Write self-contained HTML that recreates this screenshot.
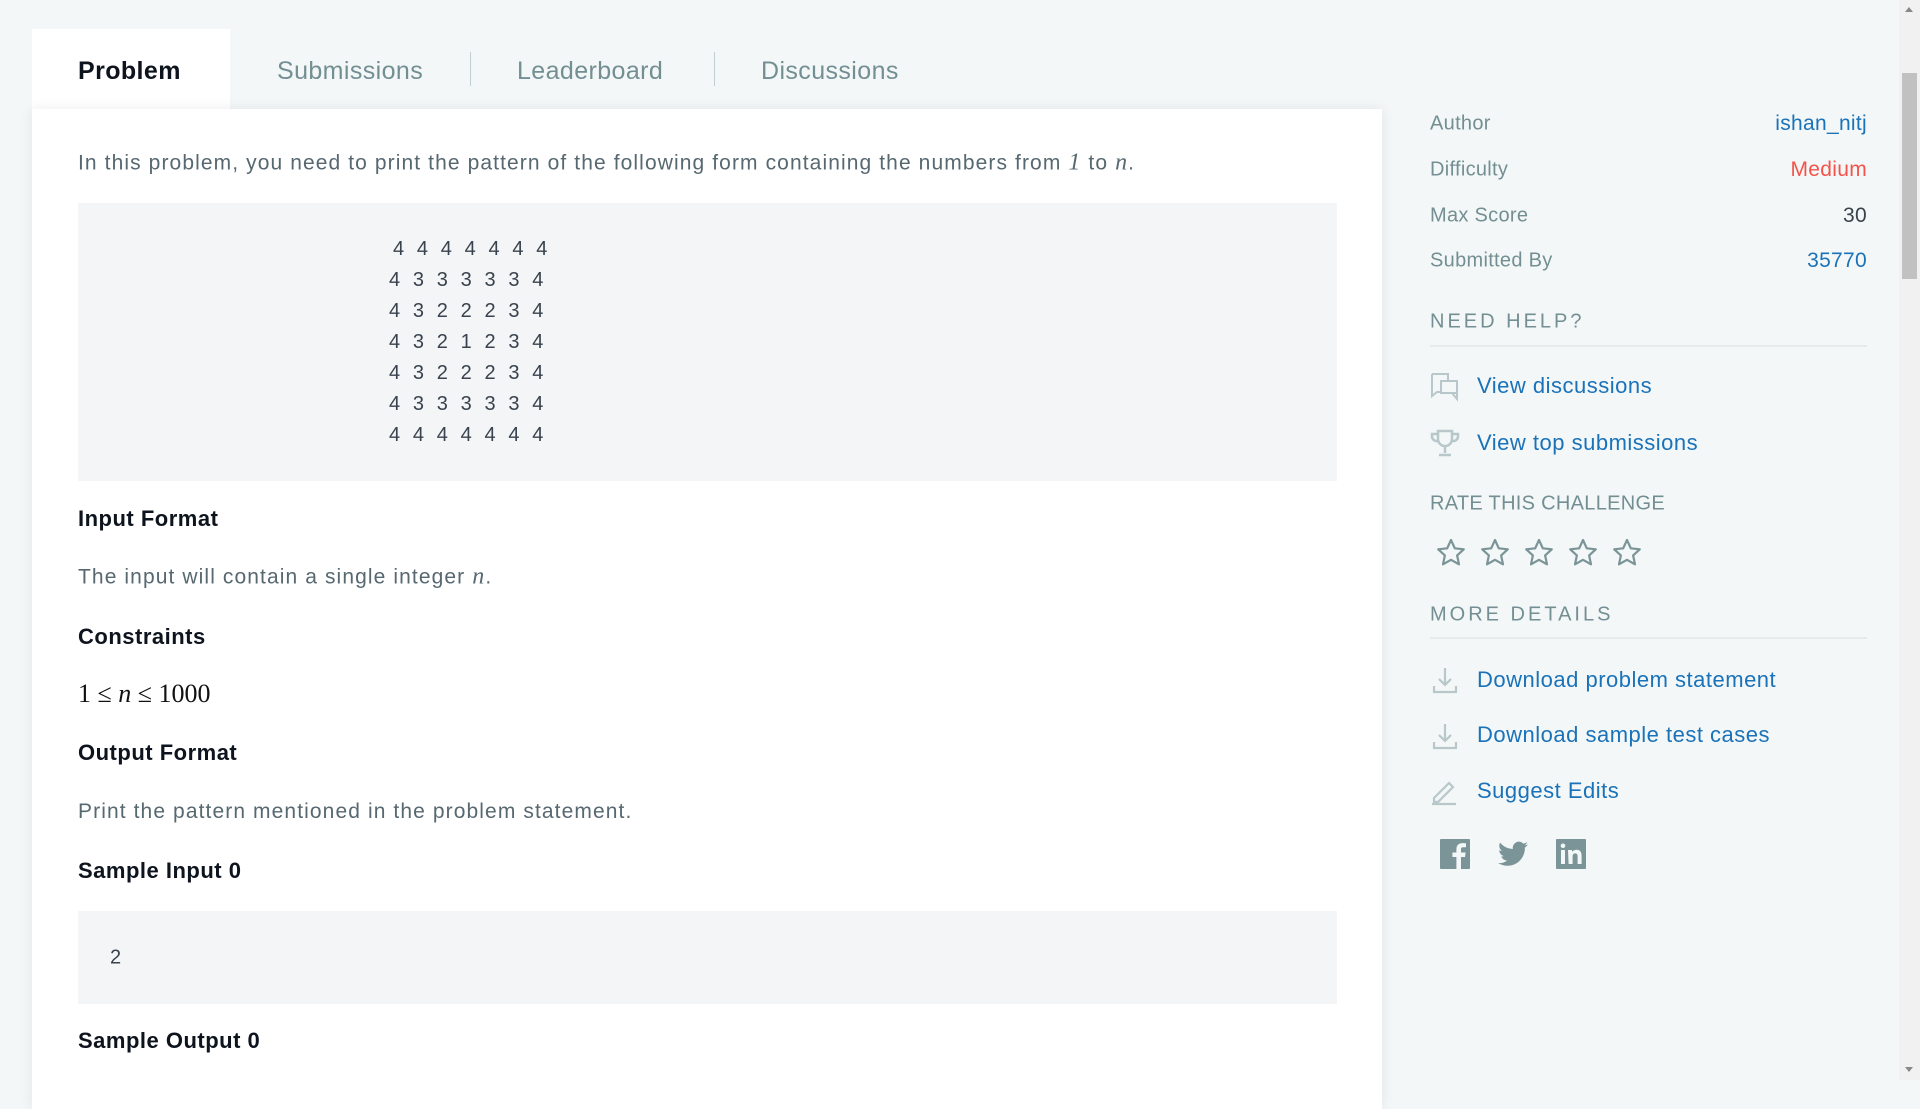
<!DOCTYPE html>
<html><head><meta charset="utf-8"><style>
*{margin:0;padding:0;box-sizing:border-box}
body{width:1920px;height:1080px;overflow:hidden;background:#f3f7f7;font-family:"Liberation Sans",sans-serif;position:relative;color:#39424e}
.abs{position:absolute;white-space:nowrap}
.tab{position:absolute;top:29px;height:80px;line-height:84px;font-size:25px;color:#738f93;letter-spacing:.4px}
.card{position:absolute;left:32px;top:109px;width:1350px;height:1000px;background:#fff;box-shadow:0 0 12px rgba(0,0,0,.08)}
.t{position:absolute;left:78px;font-size:21px;color:#576871;white-space:nowrap;transform:translateY(-50%);letter-spacing:1.1px}
.h{position:absolute;left:78px;font-size:22px;font-weight:bold;color:#0e141e;white-space:nowrap;transform:translateY(-50%);letter-spacing:.5px}
.pre{position:absolute;left:78px;width:1259px;background:#f3f5f6}
.pat{position:absolute;left:389px;font-size:20px;line-height:31px;color:#39424e;white-space:pre;letter-spacing:3.6px}
.lab{position:absolute;left:1430px;font-size:20px;color:#738f93;transform:translateY(-50%);letter-spacing:.3px}
.val{position:absolute;right:53px;font-size:21px;transform:translateY(-50%);letter-spacing:.3px}
.sec{position:absolute;left:1430px;font-size:20px;color:#738f93;letter-spacing:3px;transform:translateY(-50%)}
.line{position:absolute;left:1430px;width:437px;height:2px;background:#e5eaea}
.lnk{position:absolute;left:1477px;font-size:22px;color:#1a72b9;transform:translateY(-50%);white-space:nowrap;letter-spacing:.5px}
.ic{position:absolute;left:1430px}
i{font-family:"Liberation Serif",serif;font-size:24px}
</style></head><body>
<div class="tab" style="left:32px;width:198px;background:#fff;color:#0e141e;font-weight:bold;padding-left:46px">Problem</div>
<div class="tab" style="left:277px">Submissions</div>
<div class="abs" style="left:470px;top:52px;width:1px;height:34px;background:#c2cfd0"></div>
<div class="tab" style="left:517px">Leaderboard</div>
<div class="abs" style="left:714px;top:52px;width:1px;height:34px;background:#c2cfd0"></div>
<div class="tab" style="left:761px">Discussions</div>
<div class="card"></div>
<div class="t" style="top:163px">In this problem, you need to print the pattern of the following form containing the numbers from <i>1</i> to <i>n</i>.</div>
<div class="pre" style="top:203px;height:278px"></div>
<div class="pat" style="top:234px"><span style="padding-left:4px">4 4 4 4 4 4 4</span>
4 3 3 3 3 3 4
4 3 2 2 2 3 4
4 3 2 1 2 3 4
4 3 2 2 2 3 4
4 3 3 3 3 3 4
4 4 4 4 4 4 4</div>
<div class="h" style="top:519px">Input Format</div>
<div class="t" style="top:577px">The input will contain a single integer <i>n</i>.</div>
<div class="h" style="top:637px">Constraints</div>
<div class="t" style="top:694px;font-family:'Liberation Serif',serif;font-size:26px;color:#111;letter-spacing:0">1 ≤ <i style="font-size:26px">n</i> ≤ 1000</div>
<div class="h" style="top:753px">Output Format</div>
<div class="t" style="top:812px">Print the pattern mentioned in the problem statement.</div>
<div class="h" style="top:871px">Sample Input 0</div>
<div class="pre" style="top:911px;height:93px"></div>
<div class="t" style="top:958px;left:110px;color:#39424e;font-size:20px">2</div>
<div class="h" style="top:1041px">Sample Output 0</div>

<div class="lab" style="top:124px">Author</div><div class="val" style="top:124px;color:#1a72b9">ishan_nitj</div>
<div class="lab" style="top:170px">Difficulty</div><div class="val" style="top:170px;color:#f5534a">Medium</div>
<div class="lab" style="top:216px">Max Score</div><div class="val" style="top:216px;color:#39424e">30</div>
<div class="lab" style="top:261px">Submitted By</div><div class="val" style="top:261px;color:#1a72b9">35770</div>
<div class="sec" style="top:322px">NEED HELP?</div><div class="line" style="top:345px"></div>
<svg class="ic" style="top:372px" width="30" height="30" viewBox="0 0 30 30" fill="none" stroke="#b8c8ca" stroke-width="2"><path d="M2 2h16v6M2 2v22l5-4h5"/><rect x="11" y="9" width="16" height="12"/><path d="M27 21v6l-5-6"/></svg>
<div class="lnk" style="top:386px">View discussions</div>
<svg class="ic" style="top:429px" width="30" height="30" viewBox="0 0 30 30" fill="none" stroke="#b8c8ca" stroke-width="2.5"><path d="M8 2h14v8a7 7 0 0 1-14 0z M8 5H2v3a5 5 0 0 0 6 4 M22 5h6v3a5 5 0 0 1-6 4 M15 17v7 M9 26h12"/></svg>
<div class="lnk" style="top:443px">View top submissions</div>
<div class="sec" style="top:504px;letter-spacing:.3px;font-size:20px">RATE THIS CHALLENGE</div>
<svg class="abs" style="left:1436px;top:538px" width="210" height="30" viewBox="0 0 210 30">
<g fill="none" stroke="#7a9497" stroke-width="2.2" stroke-linejoin="round">
<path id="s" d="M15 2l3.8 8.3 9 1-6.7 6.1 1.9 8.9L15 21.8l-8 4.5 1.9-8.9L2.2 11.3l9-1z"/>
<use href="#s" x="44"/><use href="#s" x="88"/><use href="#s" x="132"/><use href="#s" x="176"/></g></svg>
<div class="sec" style="top:615px">MORE DETAILS</div><div class="line" style="top:637px"></div>
<svg class="ic" style="top:666px" width="30" height="30" viewBox="0 0 30 30" fill="none" stroke="#b8c8ca" stroke-width="2.2"><path d="M15 2v17M9 13l6 6 6-6M4 20v6h22v-6"/></svg>
<div class="lnk" style="top:680px">Download problem statement</div>
<svg class="ic" style="top:722px" width="30" height="30" viewBox="0 0 30 30" fill="none" stroke="#b8c8ca" stroke-width="2.2"><path d="M15 2v17M9 13l6 6 6-6M4 20v6h22v-6"/></svg>
<div class="lnk" style="top:735px">Download sample test cases</div>
<svg class="ic" style="top:776px" width="30" height="30" viewBox="0 0 30 30" fill="none" stroke="#b8c8ca" stroke-width="2.2"><path d="M4 22l15-15 4 4-15 15H4z M2 28h24"/></svg>
<div class="lnk" style="top:791px">Suggest Edits</div>
<svg class="abs" style="left:1440px;top:839px" width="30" height="30" viewBox="0 0 30 30"><rect width="30" height="30" rx="1" fill="#7a9497"/><path d="M21 30V18h4l.6-4.5H21v-3c0-1.3.4-2.2 2.2-2.2H26V4.3c-.5 0-2-.2-3.6-.2-3.5 0-6 2.1-6 6v3.4h-4V18h4v12z" fill="#f3f7f7"/></svg>
<svg class="abs" style="left:1498px;top:841px" width="30" height="26" viewBox="0 0 24 20"><path fill="#7a9497" d="M24 2.4c-.9.4-1.8.6-2.8.8 1-.6 1.8-1.6 2.2-2.7-1 .6-2 1-3.1 1.2A4.9 4.9 0 0 0 11.9 6C7.7 5.8 4.1 3.9 1.7.9c-1.4 2.4-.5 5.3 1.5 6.6-.8 0-1.6-.2-2.2-.6 0 2.4 1.7 4.4 3.9 4.8-.7.2-1.5.2-2.2.1.6 2 2.4 3.4 4.6 3.4A9.9 9.9 0 0 1 0 17.2 14 14 0 0 0 7.5 19.4c9.1 0 14.3-7.7 14-14.6 1-.7 1.8-1.5 2.5-2.4z"/></svg>
<svg class="abs" style="left:1556px;top:839px" width="30" height="30" viewBox="0 0 30 30"><rect width="30" height="30" rx="1" fill="#7a9497"/><path fill="#f3f7f7" d="M5 11h4v14H5zM7 4.5a2.3 2.3 0 1 1 0 4.6 2.3 2.3 0 0 1 0-4.6zM12 11h4v2c.7-1.2 2.2-2.3 4.4-2.3 4.4 0 5.2 2.9 5.2 6.7V25h-4v-6.8c0-1.7 0-3.8-2.3-3.8s-2.7 1.8-2.7 3.7V25h-4z"/></svg>
<div class="abs" style="left:1899px;top:0;width:21px;height:1080px;background:#f1f1f1"></div>
<div class="abs" style="left:1902px;top:73px;width:15px;height:206px;background:#c1c1c1"></div>
<div class="abs" style="left:1905px;top:7px;border:4px solid transparent;border-bottom:5px solid #888;border-top:0"></div>
<div class="abs" style="left:1905px;top:1067px;border:4px solid transparent;border-top:5px solid #888;border-bottom:0"></div>
</body></html>
